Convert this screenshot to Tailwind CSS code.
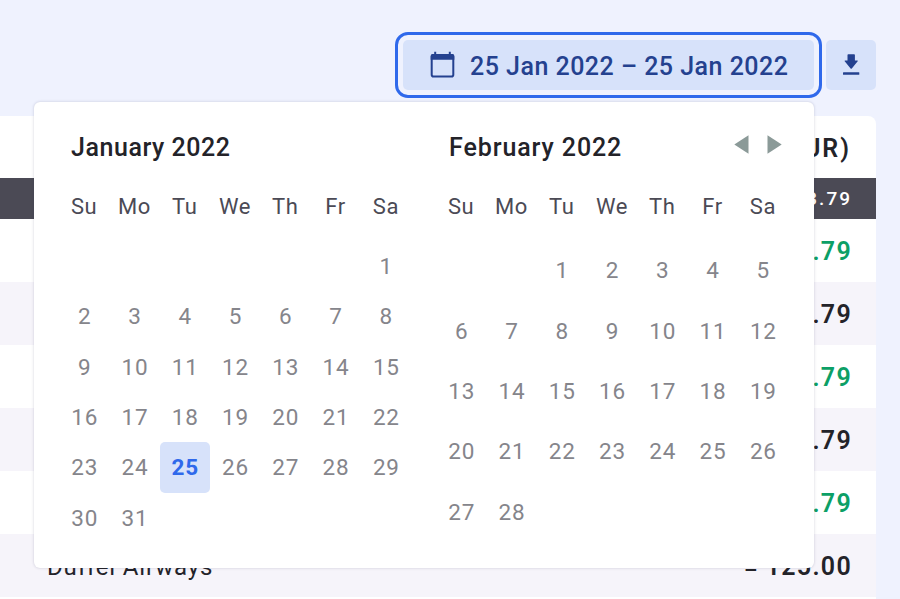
<!DOCTYPE html>
<html lang="en">
<head>
  <meta charset="UTF-8" />
  <meta name="viewport" content="width=device-width, initial-scale=1" />
  <title>Transactions</title>
  <script src="https://cdn.jsdelivr.net/npm/@tailwindcss/browser@4"></script>
</head>
<body class="relative h-screen overflow-hidden bg-[#eff2fe] font-['Roboto','Liberation_Sans',sans-serif] text-[#232329]">
  <!-- Toolbar -->
  <header class="flex justify-end gap-3 pt-10 pr-6">
    <button class="flex h-[50px] w-[411px] items-center rounded-[5px] bg-[#d7e2fa] pl-[27px] text-[25px] font-medium tracking-[0.48px] whitespace-nowrap text-[#24418f] outline-3 outline-offset-5 outline-[#2f69eb]">
      <svg class="mr-[15px] h-[28px] w-[25px] shrink-0" viewBox="0 0 25 28" fill="none">
        <rect x="1.700" y="4" width="21.600" height="21.600" rx="1.800" stroke="currentColor" stroke-width="2" />
        <path d="M.7 8.800V5a2 2 0 0 1 2-2h1.500V.8h2V3h12.600V.8h2V3h1.500a2 2 0 0 1 2 2v3.800Z" fill="currentColor" />
      </svg>
      <span class="pt-[3px]">25 Jan 2022 – 25 Jan 2022</span>
    </button>
    <button class="flex size-[50px] items-center justify-center rounded-[5px] bg-[#d7e2fa] text-[#24418f]">
      <svg class="h-[22px] w-[18px]" viewBox="0 0 18 22" fill="currentColor">
        <path d="M6.300.3h5.800a.8.8 0 0 1 .8.800V6.500H15c.8 0 1 .6.500 1.100L9.800 14.500a.9.900 0 0 1-1.200 0L2.900 7.600C2.400 7.100 2.600 6.500 3.400 6.500h2.100V1.100a.8.800 0 0 1 .8-.8Z" />
        <rect x="1" y="18.300" width="16.300" height="2.400" rx=".5" />
      </svg>
    </button>
  </header>

  <!-- Transactions table -->
  <main class="mt-[26px] mr-6 rounded-tr-lg bg-white text-[25px] font-medium tracking-[1px]">
    <div class="flex h-[62px] items-center justify-end pt-[3px] pr-[25px] font-semibold tracking-[2px]">Amount (EUR)</div>
    <div class="flex h-[41px] items-center justify-end bg-[#4b4a55] pt-[2px] pr-[24px] text-[19px] tracking-[2px] text-white">2,213.79</div>
    <div id="rows"></div>
  </main>

  <!-- Date picker -->
  <section class="absolute top-[102px] left-[34px] flex h-[466px] w-[780px] gap-[25px] rounded-md bg-white px-[25px] shadow-[0_0_3px_rgba(40,40,80,0.22)]">
    <div class="flex w-[352px] flex-col pt-[26px] pb-[25px]">
      <h2 class="h-[40px] pl-[12px] text-[25px] leading-[40px] font-medium tracking-[0.55px]">January 2022</h2>
      <div id="jan-head" class="mt-[13px] grid h-[50px] grid-cols-7 items-center text-center text-[22px] tracking-[0.6px] text-[#4b4a55]"></div>
      <div id="jan" class="mt-[10px] grid flex-1 grid-cols-7 text-[22.500px] leading-[26px] tracking-[0.8px] text-[#85858b]"></div>
    </div>
    <div class="flex w-[352px] flex-col pt-[26px] pb-[26px]">
      <div class="flex h-[40px] items-start justify-between pr-[6px] pl-[13px]">
        <h2 class="text-[25px] leading-[40px] font-medium tracking-[0.9px]">February 2022</h2>
        <div class="mt-[7px] flex gap-[18px]">
          <svg class="h-[19px] w-[15px]" viewBox="0 0 15 19" fill="#8b9a98"><path d="M.3 9.500 14.500.2v18.600Z" /></svg>
          <svg class="h-[19px] w-[15px]" viewBox="0 0 15 19" fill="#8b9a98"><path d="M14.700 9.500.5.2v18.600Z" /></svg>
        </div>
      </div>
      <div id="feb-head" class="mt-[13px] grid h-[50px] grid-cols-7 items-center text-center text-[22px] tracking-[0.6px] text-[#4b4a55]"></div>
      <div id="feb" class="mt-[9px] grid flex-1 grid-cols-7 text-[22.500px] leading-[26px] tracking-[0.8px] text-[#85858b]"></div>
    </div>
  </section>

  <script>
    const weekdays = ["Su", "Mo", "Tu", "We", "Th", "Fr", "Sa"];

    function renderMonth(id, offset, count, selected) {
      document.getElementById(id + "-head").innerHTML = weekdays
        .map((d) => `<span>${d}</span>`)
        .join("");

      let html = "<span></span>".repeat(offset);
      for (let day = 1; day <= count; day++) {
        const active = day === selected ? "rounded-[5px] bg-[#d7e2fa] font-bold text-[#2f69eb]" : "";
        html += `<span class="flex items-center justify-center pl-px ${active}">${day}</span>`;
      }
      document.getElementById(id).innerHTML = html;
    }

    renderMonth("jan", 6, 31, 25);
    renderMonth("feb", 2, 28);

    const amounts = [
      ["+", "123.79"],
      ["–", "123.79"],
      ["+", "123.79"],
      ["–", "123.79"],
      ["+", "123.79"],
      ["–", "125.00"],
    ];
    document.getElementById("rows").innerHTML = amounts
      .map(([sign, amount], i) => `
        <div class="flex h-[63px] items-center justify-between pt-[3px] pr-[24px] pl-[47px] ${i % 2 ? "bg-[#f6f4fa]" : "bg-white text-[#0c9f66]"}">
          <span class="text-[24px] font-normal tracking-[0.850px] text-[#232329]">Duffel Airways</span>
          <span class="flex items-center gap-[7px] font-semibold tracking-[1.300px]"><span class="pt-[6px] text-[21px] leading-[30px]">${sign}</span>${amount}</span>
        </div>`)
      .join("") + `<div class="h-[2px] bg-white"></div>`;
  </script>
</body>
</html>
